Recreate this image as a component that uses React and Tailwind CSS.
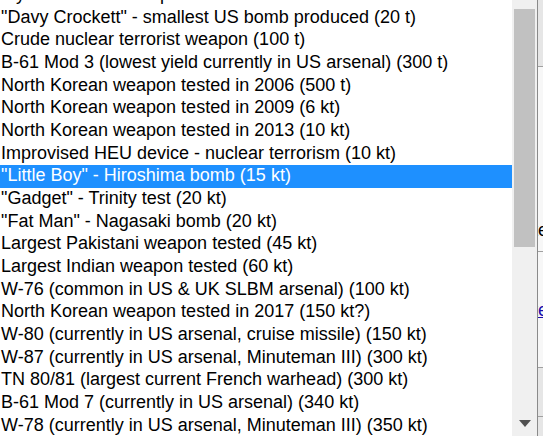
import React from "react";

const items = [
  "My custom test weapon",
  "\"Davy Crockett\" - smallest US bomb produced (20 t)",
  "Crude nuclear terrorist weapon (100 t)",
  "B-61 Mod 3 (lowest yield currently in US arsenal) (300 t)",
  "North Korean weapon tested in 2006 (500 t)",
  "North Korean weapon tested in 2009 (6 kt)",
  "North Korean weapon tested in 2013 (10 kt)",
  "Improvised HEU device - nuclear terrorism (10 kt)",
  "\"Little Boy\" - Hiroshima bomb (15 kt)",
  "\"Gadget\" - Trinity test (20 kt)",
  "\"Fat Man\" - Nagasaki bomb (20 kt)",
  "Largest Pakistani weapon tested (45 kt)",
  "Largest Indian weapon tested (60 kt)",
  "W-76 (common in US & UK SLBM arsenal) (100 kt)",
  "North Korean weapon tested in 2017 (150 kt?)",
  "W-80 (currently in US arsenal, cruise missile) (150 kt)",
  "W-87 (currently in US arsenal, Minuteman III) (300 kt)",
  "TN 80/81 (largest current French warhead) (300 kt)",
  "B-61 Mod 7 (currently in US arsenal) (340 kt)",
  "W-78 (currently in US arsenal, Minuteman III) (350 kt)",
];

export default function App() {
  return (
    <div
      className="flex w-[543px] h-[436px] overflow-hidden bg-white"
      style={{ fontFamily: '"Liberation Sans", Arial, sans-serif' }}
    >
      <div className="flex w-[537px] h-full shrink-0">
        <div className="w-[512px] h-full overflow-hidden">
          <div className="-mt-[16.34px]">
            {items.map((t, i) => {
              const sel = i === 8;
              return (
                <div
                  key={i}
                  className={`h-[22.67px] leading-[20px] pt-[0.5px] text-[18px] pl-[1px] whitespace-nowrap ${
                    sel ? "bg-[#1e90ff] text-white" : "text-black"
                  }`}
                >
                  {t}
                </div>
              );
            })}
          </div>
        </div>
        <div className="w-[25px] h-full bg-[#f0f0f0] flex flex-col items-center">
          <div className="mt-[9px] w-[21px] h-[238px] bg-[#c1c1c1]" />
          <div className="flex-1" />
          <svg width="12" height="8" viewBox="0 0 12 8" className="mb-[8px]">
            <polygon points="0,0 12,0 6,7" fill="#505050" />
          </svg>
        </div>
      </div>
      <div className="flex-1 h-full border-l border-[#8a8a8a] bg-[#e6e6e6] flex flex-col text-[18px] overflow-hidden">
        <div className="h-[67px] border-b border-[#a0a0a0]" />
        <div className="h-[185px] border-b border-[#a0a0a0] flex flex-col justify-end bg-[#f7f7f7]">
          <span className="leading-[22px] mb-[10px] -ml-[5px] text-black">te</span>
        </div>
        <div className="h-[116px] border-b border-[#a0a0a0] flex flex-col justify-center bg-[#f7f7f7]">
          <span className="-ml-[5px] text-[#1a0dab] underline leading-[20px]">te</span>
        </div>
        <div className="h-[49px] border-b border-[#a0a0a0]" />
      </div>
    </div>
  );
}
